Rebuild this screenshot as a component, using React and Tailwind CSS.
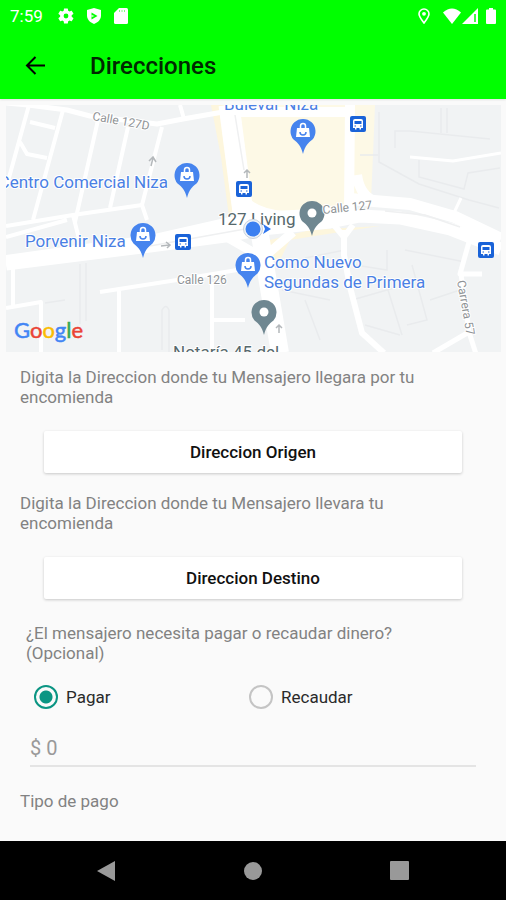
import { useState } from "react";

const shops = [
  { x: 303, y: 131 },
  { x: 187, y: 175 },
  { x: 143, y: 235 },
  { x: 248, y: 265 },
];

const places = [
  { x: 312, y: 213 },
  { x: 264, y: 312 },
];

const busStops = [
  { x: 358, y: 124 },
  { x: 244, y: 189 },
  { x: 183, y: 242 },
  { x: 486, y: 250 },
];

const paymentModes = ["Pagar", "Recaudar"];

function StatusBar() {
  return (
    <div className="flex h-8 items-center justify-between px-2.5 text-white">
      <div className="flex items-center gap-3">
        <span className="w-9 text-[17px]">7:59</span>
        {/* Settings */}
        <svg className="size-4" viewBox="2 2 20 20" fill="currentColor">
          <path d="M19.1 12.9a7 7 0 0 0 0-1.8l2-1.6c.2-.1.3-.4.1-.6l-1.9-3.3c-.1-.2-.4-.3-.6-.2l-2.4 1a7 7 0 0 0-1.6-1l-.4-2.5a.5.5 0 0 0-.5-.4h-3.8c-.3 0-.5.2-.5.4l-.4 2.5c-.6.3-1.1.6-1.6 1l-2.4-1c-.2-.1-.5 0-.6.2L2.6 8.9c-.1.2-.1.5.1.6l2 1.6a7 7 0 0 0 0 1.8l-2 1.6c-.2.1-.2.4-.1.6l1.9 3.3c.1.2.4.3.6.2l2.4-1c.5.4 1 .7 1.6 1l.4 2.5c0 .2.2.4.5.4h3.8c.3 0 .5-.2.5-.4l.4-2.5c.6-.3 1.1-.6 1.6-1l2.4 1c.2.1.5 0 .6-.2l1.9-3.3c.1-.2.1-.5-.1-.6zM12 15a3 3 0 1 1 0-6 3 3 0 0 1 0 6z" />
        </svg>
        {/* Play Protect */}
        <svg className="size-4" viewBox="0 0 16 16">
          <path d="M8 0l7 2v5.5c0 4-3 7-7 8.5-4-1.5-7-4.5-7-8.5V2z" fill="currentColor" />
          <path d="M5.5 4.5l6 3.5-6 3.5z" fill="#00ff00" />
          <path d="M5.5 7l3 1-3 1z" fill="currentColor" />
        </svg>
        {/* SD card */}
        <svg className="h-4 w-3.5" viewBox="0 0 14 16">
          <path d="M5 0h7.5Q14 0 14 1.5v13q0 1.500-1.500 1.500h-11Q0 16 0 14.500V5z" fill="currentColor" />
          <path d="M5.5 2v2M8 2v2M10.500 2v2" stroke="#00ff00" strokeOpacity=".5" />
        </svg>
      </div>
      <div className="flex items-center">
        <svg className="mr-3 h-4 w-3" viewBox="0 0 12 16" fill="none" stroke="currentColor">
          <path d="M6 15C3 11 1 8.5 1 6a5 5 0 0 1 10 0c0 2.5-2 5-5 9z" strokeWidth="1.6" />
          <circle cx="6" cy="5.8" r="1.9" fill="currentColor" stroke="none" />
        </svg>
        <svg className="h-4 w-5" viewBox="0 0 20 16" fill="currentColor">
          <path d="M10 16L1 4.5q9-8 18 0z" />
        </svg>
        <svg className="mr-2 size-4" viewBox="0 0 16 16">
          <path d="M0 16L16 0v16z" fill="currentColor" />
          <path d="M13 6v8" stroke="#00ff00" strokeWidth="1.5" />
        </svg>
        <svg className="h-4 w-2.5" viewBox="0 0 10 16" fill="currentColor">
          <path d="M3 0h4v1.5h2q1 0 1 1V15q0 1-1 1H1q-1 0-1-1V2.5q0-1 1-1h2z" />
        </svg>
      </div>
    </div>
  );
}

function AppBar() {
  return (
    <div className="flex h-[67px] items-center gap-[42px] px-6">
      <button type="button" aria-label="Volver" className="text-black">
        <svg className="size-6" viewBox="0 0 24 24" fill="none" stroke="currentColor" strokeWidth="2">
          <path d="M21 11.5H3M11.5 3L3 11.5l8.5 8.5" />
        </svg>
      </button>
      <h1 className="text-2xl font-medium text-[#002800]">Direcciones</h1>
    </div>
  );
}

function Pin({ x, y, shop }) {
  return (
    <g transform={`translate(${x} ${y})`}>
      <path
        d="M0 23C-2 15-5 12-9.5 8.5A12.5 12.5 0 1 1 9.5 8.5C5 12 2 15 0 23z"
        fill={shop ? "#4684ee" : "#6f8791"}
      />
      {shop ? (
        <g fill="none">
          <path d="M-6-3H6L7 6H-7z" fill="#fff" />
          <path d="M-2.5-3v-2a2.5 2.5 0 0 1 5 0v2" stroke="#fff" strokeWidth="1.5" />
          <path d="M-3 1a3 3 0 0 0 6 0" stroke="#4684ee" strokeWidth="1.5" />
        </g>
      ) : (
        <circle r="4.5" fill="#fff" />
      )}
    </g>
  );
}

function BusStop({ x, y }) {
  return (
    <g transform={`translate(${x} ${y})`}>
      <rect x="-8" y="-8" width="16" height="16" rx="2" fill="#1a63d8" />
      <path d="M-5-3q0-2 2-2h6q2 0 2 2v7h-2v1.5h-1.5V4h-3v1.5H-3V4h-2z" fill="#fff" />
      <path d="M-3.5-3h7v3h-7z" fill="#1a63d8" />
      <path d="M-3.5 2h1.5M2 2h1.5" stroke="#1a63d8" />
    </g>
  );
}

function MapView() {
  return (
    <svg
      className="block h-[247px] w-full"
      viewBox="6 105 495 247"
      preserveAspectRatio="xMidYMid slice"
      role="img"
      aria-label="Mapa"
    >
      <rect x="6" y="105" width="495" height="247" fill="#f1f3f4" />

      {/* Commercial areas */}
      <path d="M211 105h14l18 110-14 2-8-60z" fill="#fdf6dd" />
      <path d="M238 105H375l-2 50-2 45-60 15-60 2z" fill="#fdf9e6" />
      <path d="M262 262l8-22 40-10 70-4-40 6-50 8-10 20z" fill="#fdf6dd" />

      {/* Block outlines */}
      <g fill="none" stroke="#e9ebed" strokeWidth="1.5">
        <path d="M379 112v50l40 22 50 16 30 8M395 148v-17h15l80 8M441 108v25M447 108v25M419 160v17l45 12 4-16 32-5M360 155h18" />
        <path d="M80 264v60M86 263v58M45 303l20-3M162 350v-40q4-7 7 0v42M305 258l40-8M355 265l32 5v-20M405 250l60 12M412 265l15 55-20 5M388 290l14 45M352 300l42-12M365 325l35 10M282 290l48 10M305 300l15 40M430 300l30-10" />
      </g>

      {/* Side streets */}
      <g fill="none" stroke="#fff" strokeWidth="4" strokeLinejoin="round">
        <path d="M6 103l22 2 39 5 23 6 67 8 26-5 40-7" strokeWidth="5" />
        <path d="M29 105L7 185M63 110L33 220M98 120L75 222M128 127l-18 81M162 127l-20 78 5 15M180 105l4 14" />
        <path d="M30 122l25 6M20 142l7 12 20 4M6 226l67-11 69-10M6 237l61-17M73 215l6 24" />
        <path d="M13 266v40M6 308l35-6v50M100 292l77-12 72-12M119 290v62M212 282v70M213 320h32" />
        <path d="M334 225l10 12 9-12M344 230v25l6 32 12 46 22 20" strokeWidth="6" />
        <path d="M469 242l-9 32h22M461 274l8 58 7 22M433 353l36-21" strokeWidth="5" />
        <path d="M452 217l9-19M410 157l43 4 48-8" strokeWidth="3" />
      </g>

      {/* Main avenues */}
      <g fill="none" stroke="#fff" strokeLinejoin="round">
        <path d="M229 105l15 115" strokeWidth="21" />
        <path d="M260 235l20 118" strokeWidth="18" />
        <path d="M6 264l144-18 75-10 37-7 68-7 30-6 40 2 50 11 51 20" strokeWidth="13" />
        <path d="M6 261l144-20 75-17 28-6 60-3 40-6M350 199l60 5 45 13 46 22" strokeWidth="12" />
        <path d="M350 105l-1 108M238 112h114M357 175q3 22 20 27" strokeWidth="10" />
        <path d="M225 236l38 22 30-26M240 190q5 22 45 26" strokeWidth="9" />
      </g>
      <g fill="none" stroke="#eff0f1" strokeWidth="1.5">
        <path d="M235 115l9 55M150 246l95-17M385 211l40 4 35 12" />
      </g>

      {/* Direction arrows */}
      <g fill="none" stroke="#b4b8bb" strokeWidth="1.5">
        <path d="M151 166l2-8M149 161l4-4 3 5" />
        <path d="M247 178v-8M244 173l3-3 3 3" />
        <path d="M161 246l8-1M166 242l4 3-3 3" />
        <path d="M279 333v-8M276 328l3-3 3 3" />
      </g>

      {busStops.map((stop) => (
        <BusStop key={`${stop.x}-${stop.y}`} {...stop} />
      ))}
      {shops.map((shop) => (
        <Pin key={`${shop.x}-${shop.y}`} {...shop} shop />
      ))}
      {places.map((place) => (
        <Pin key={`${place.x}-${place.y}`} {...place} />
      ))}

      <g fontFamily="Roboto, sans-serif" stroke="#fff" strokeWidth="2" paintOrder="stroke" strokeLinejoin="round">
        <g fontSize="12" fill="#8f9396">
          <text x="92" y="120" transform="rotate(10 92 120)">Calle 127D</text>
          <text x="323" y="214" transform="rotate(-6 323 214)">Calle 127</text>
          <text x="177" y="284">Calle 126</text>
          <text x="457" y="281" transform="rotate(80 457 281)">Carrera 57</text>
        </g>
        <g fontSize="17" fill="#4a80e4">
          <text x="224" y="110">Bulevar Niza</text>
          <text x="168" y="188" textAnchor="end">Centro Comercial Niza</text>
          <text x="25" y="247">Porvenir Niza</text>
          <text x="264" y="268">Como Nuevo</text>
          <text x="264" y="288">Segundas de Primera</text>
        </g>
        <g fontSize="17" fill="#56686c">
          <text x="218" y="225">127 Living</text>
          <text x="173" y="358">Notaría 45 del</text>
        </g>
      </g>

      {/* Current location */}
      <circle cx="253" cy="229" r="9.5" fill="#eef2f7" stroke="#c9d2dc" />
      <path d="M263 224l8 5-8 5 2-5z" fill="#2f76ee" />
      <circle cx="253" cy="229" r="7.5" fill="#3b7ff0" />

      <text x="14" y="338" fontSize="22" fontFamily="Lato, sans-serif" strokeWidth=".5">
        <tspan fill="#4285f4" stroke="#4285f4">G</tspan>
        <tspan fill="#ea4335" stroke="#ea4335">o</tspan>
        <tspan fill="#fbbc04" stroke="#fbbc04">o</tspan>
        <tspan fill="#4285f4" stroke="#4285f4">g</tspan>
        <tspan fill="#34a853" stroke="#34a853">l</tspan>
        <tspan fill="#ea4335" stroke="#ea4335">e</tspan>
      </text>
    </svg>
  );
}

function AddressButton({ children }) {
  return (
    <button
      type="button"
      className="mx-6 mt-6 rounded-xs bg-white py-[11px] text-[17px] font-medium text-[#111] shadow-[0_1px_3px_rgba(0,0,0,0.2)]"
    >
      {children}
    </button>
  );
}

function NavigationBar() {
  return (
    <nav className="flex h-[59px] items-center justify-around bg-black px-8 text-[#999]">
      <button type="button" aria-label="Atrás">
        <svg className="size-5" viewBox="0 0 20 20" fill="currentColor">
          <path d="M19 0v20L1 10z" />
        </svg>
      </button>
      <button type="button" aria-label="Inicio">
        <svg className="size-5" viewBox="0 0 20 20" fill="currentColor">
          <circle cx="10" cy="10" r="9" />
        </svg>
      </button>
      <button type="button" aria-label="Recientes">
        <svg className="size-5" viewBox="0 0 20 20" fill="currentColor">
          <rect width="19" height="19" rx="1" />
        </svg>
      </button>
    </nav>
  );
}

export default function App() {
  const [mode, setMode] = useState("Pagar");
  const [amount, setAmount] = useState("");

  return (
    <div className="flex min-h-screen flex-col bg-[#fafafa] font-[Roboto,sans-serif] text-[17px] leading-5 text-[#828282]">
      <header className="bg-[#00ff00] shadow-[0_1px_2px_rgba(0,0,0,0.1)]">
        <StatusBar />
        <AppBar />
      </header>

      <main className="flex grow flex-col">
        <div className="pt-1.5 pr-[5px] pl-1.5">
          <MapView />
        </div>

        <form className="flex flex-col px-5 pt-[15px]" onSubmit={(e) => e.preventDefault()}>
          <p className="pr-10">Digita la Direccion donde tu Mensajero llegara por tu encomienda</p>
          <AddressButton>Direccion Origen</AddressButton>

          <p className="mt-5 pr-10">Digita la Direccion donde tu Mensajero llevara tu encomienda</p>
          <AddressButton>Direccion Destino</AddressButton>

          <fieldset className="mt-6 px-1.5">
            <legend className="pr-10">
              ¿El mensajero necesita pagar o recaudar dinero?
              <br />
              (Opcional)
            </legend>
            <div className="mt-[22px] flex pr-4 pl-2">
              {paymentModes.map((item) => (
                <label key={item} className="flex w-1/2 items-center gap-2 text-[#2a2a2a]">
                  <input
                    type="radio"
                    name="mode"
                    checked={mode === item}
                    onChange={() => setMode(item)}
                    className="size-6 appearance-none rounded-full border-2 border-[#c4c4c4] checked:border-[#0b9583] checked:bg-[radial-gradient(circle,#0b9583_6px,transparent_7px)]"
                  />
                  {item}
                </label>
              ))}
            </div>
          </fieldset>

          <input
            type="text"
            inputMode="numeric"
            aria-label="Valor"
            placeholder="$ 0"
            value={amount}
            onChange={(e) => setAmount(e.target.value)}
            className="mx-2.5 mt-[22px] h-9 border-b-2 border-[#e4e4e4] text-xl text-[#222] outline-none placeholder:text-[#999]"
          />

          <p className="mt-6">Tipo de pago</p>
        </form>
      </main>

      <NavigationBar />
    </div>
  );
}
